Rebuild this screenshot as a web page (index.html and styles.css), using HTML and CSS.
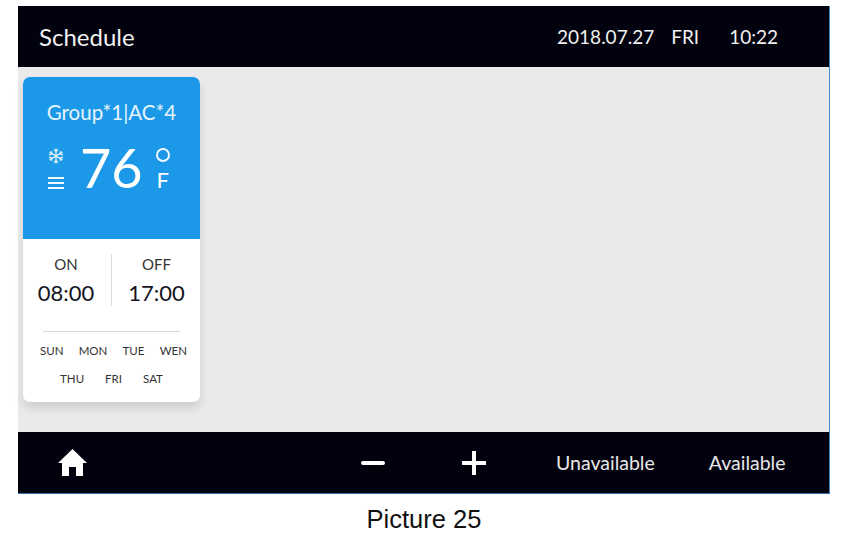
FILE: index.html
```html
<!DOCTYPE html>
<html lang="en">
<head>
    <meta charset="UTF-8">
    <title>Schedule</title>
    <link rel="stylesheet" href="styles.css">
</head>
<body>
    <div class="screen">
        <div class="top-bar">
            <div class="title">Schedule</div>
            <div class="clock">
                <span class="date">2018.07.27</span>
                <span class="weekday">FRI</span>
                <span class="time">10:22</span>
            </div>
        </div>

        <div class="content">
            <div class="card">
                <div class="card-head">
                    <div class="group-name">Group*1|AC*4</div>
                    <div class="temp-row">
                        <div class="mode-icons">
                            <svg class="snow" viewBox="0 0 16 16" width="16" height="16" fill="none" stroke="#d5ecfb" stroke-width="1.4">
                                <path d="M8 0.5v15M1.5 4.2l13 7.6M14.5 4.2l-13 7.6"/>
                                <path d="M6 1.5l2 2 2-2M6 14.5l2-2 2 2M1 6.8l3-0.8-0.8-3M15 6.8l-3-0.8 0.8-3M1 9.2l3 0.8-0.8 3M15 9.2l-3 0.8 0.8 3"/>
                            </svg>
                            <div class="fan-lines">
                                <span></span><span></span><span></span>
                            </div>
                        </div>
                        <div class="temp">76</div>
                        <div class="unit">
                            <span class="degree"></span>
                            <span class="unit-letter">F</span>
                        </div>
                    </div>
                </div>
                <div class="card-body">
                    <div class="times">
                        <div class="time-col on">
                            <div class="time-label">ON</div>
                            <div class="time-value">08:00</div>
                        </div>
                        <div class="time-col off">
                            <div class="time-label">OFF</div>
                            <div class="time-value">17:00</div>
                        </div>
                    </div>
                    <div class="days">
                        <div class="day-row">
                            <span>SUN</span><span>MON</span><span>TUE</span><span>WEN</span>
                        </div>
                        <div class="day-row short">
                            <span>THU</span><span>FRI</span><span>SAT</span>
                        </div>
                    </div>
                </div>
            </div>
        </div>

        <div class="bottom-bar">
            <svg class="home" viewBox="0 0 29 27" width="29" height="27" fill="#fff">
                <path d="M14.5 0L0 14H4V27H11V18H18V27H25V14H29Z"/>
            </svg>
            <div class="minus"></div>
            <div class="plus"></div>
            <div class="action unavailable">Unavailable</div>
            <div class="action available">Available</div>
        </div>
    </div>
    <p class="caption">Picture 25</p>
</body>
</html>
```

FILE: styles.css
```css
body {
    margin: 0;
    padding: 6px 14px 0 18px;
    background: #fff;
    font-family: Lato, Arial, sans-serif;
}

.screen {
    height: 488px;
    display: flex;
    flex-direction: column;
    border-right: 1px solid #3f86c6;
    border-bottom: 1px solid #2a6cab;
    box-sizing: border-box;
}

.top-bar {
    height: 61px;
    background: #02020e;
    color: #f0f0f0;
    display: flex;
    align-items: center;
    justify-content: space-between;
    padding: 0 51px 0 21px;
}

.title {
    font-size: 24px;
}

.clock {
    display: flex;
    font-size: 19px;
}

.date {
    margin-right: 17px;
}

.weekday {
    margin-right: 30px;
}

.content {
    flex: 1;
    background: #eaeaea;
    padding: 10px 0 0 5px;
}

.card {
    width: 177px;
    height: 325px;
    background: #fff;
    border-radius: 7px;
    box-shadow: 0 6px 10px rgba(0,0,0,0.12);
    overflow: hidden;
}

.card-head {
    height: 162px;
    background: #1b98e8;
    color: #fff;
    padding-top: 24px;
    box-sizing: border-box;
}

.group-name {
    font-size: 20.5px;
    line-height: 23px;
    text-align: center;
    color: #e6f4fd;
}

.temp-row {
    display: flex;
    align-items: center;
    margin-top: 11px;
    padding-left: 25px;
}

.mode-icons {
    width: 16px;
    display: flex;
    flex-direction: column;
    gap: 13px;
}

.snow {
    display: block;
}

.fan-lines {
    display: flex;
    flex-direction: column;
    gap: 3px;
}

.fan-lines span {
    height: 2px;
    background: #f0f8fe;
}

.temp {
    font-size: 54px;
    line-height: 66px;
    margin-left: 16px;
}

.unit {
    display: flex;
    flex-direction: column;
    align-items: center;
    margin-left: 13px;
    padding-top: 3px;
    gap: 7px;
}

.degree {
    width: 10px;
    height: 10px;
    border: 2px solid #f0f8fe;
    border-radius: 50%;
}

.unit-letter {
    font-size: 22px;
    line-height: 22px;
}

.card-body {
    padding: 15px 20px 0;
    color: #222;
}

.times {
    display: flex;
    margin: 0 -6px;
}

.time-col {
    text-align: center;
    white-space: nowrap;
    box-sizing: border-box;
}

.on {
    width: 75px;
    padding-right: 16px;
    border-right: 1px solid #dcdcdc;
}

.off {
    width: 74px;
    padding-left: 15px;
}

.time-label {
    font-size: 15px;
    line-height: 20px;
    color: #333;
}

.time-value {
    font-size: 22px;
    line-height: 26px;
    margin-top: 6px;
    color: #14141e;
}

.days {
    font-size: 11.5px;
    color: #333;
    margin-top: 25px;
    padding-top: 4px;
    border-top: 1px solid #d8d8d8;
}

.day-row {
    display: flex;
    justify-content: space-between;
    height: 28px;
    align-items: center;
    margin: 0 -7px 0 -3px;
}

.day-row.short {
    justify-content: center;
    gap: 21px;
    padding-right: 4px;
}

.bottom-bar {
    height: 61px;
    background: #02020e;
    color: #e8e8e8;
    display: flex;
    align-items: center;
    font-size: 19.5px;
}

.home {
    margin-left: 40px;
}

.minus {
    width: 24px;
    height: 4px;
    border-radius: 2px;
    background: #fff;
    margin-left: 274px;
}

.plus {
    width: 24px;
    height: 24px;
    margin-left: 77px;
    background:
        linear-gradient(#fff, #fff) center / 100% 4px no-repeat,
        linear-gradient(#fff, #fff) center / 4px 100% no-repeat;
    border-radius: 2px;
}

.unavailable {
    margin-left: 70px;
}

.available {
    margin-left: 54px;
}

.caption {
    margin: 11px 0 0;
    text-align: center;
    font-family: "Liberation Sans", Arial, sans-serif;
    font-size: 25.5px;
    line-height: 28px;
    color: #111;
}
```
